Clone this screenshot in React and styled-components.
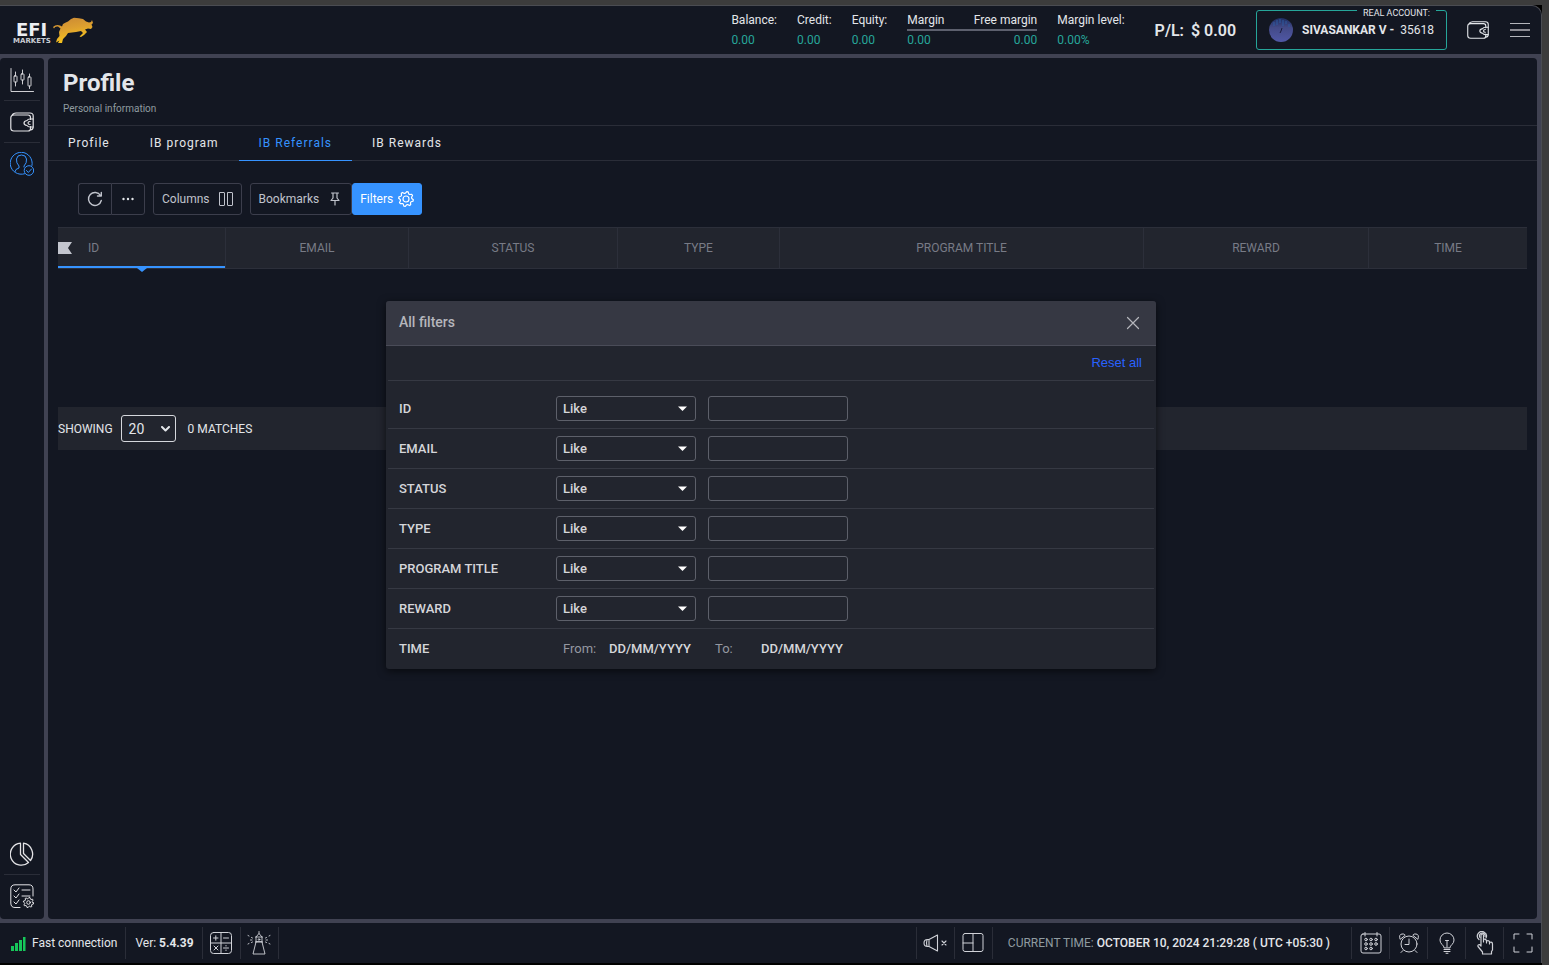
import React from "react";
import styled, { createGlobalStyle, css } from "styled-components";

const c = {
  chrome: "#3c3c3c",
  gutter: "#404252",
  panel: "#131722",
  raised: "#22252e",
  line: "#2a2d38",
  blue: "#3693ff",
  teal: "#26a69a",
  text: "#e3e6ea",
  muted: "#787b86",
};

const Global = createGlobalStyle`
  * { box-sizing: border-box; }
  body { margin: 0; background: #000; color: ${c.text}; font: 400 12px/16px Roboto, "Liberation Sans", sans-serif; }
  button, input, select { font: inherit; color: inherit; }
  button { cursor: pointer; }
  a { color: inherit; text-decoration: none; }
  h1, h2, p, dl, dd { margin: 0; }
  svg { display: block; flex: none; }
`;

const Page = styled.div`
  position: relative;
  display: flex;
  flex-direction: column;
  min-height: 100vh;
  border: solid ${c.chrome};
  border-width: 5px 7px 0 0;
`;

const Shell = styled.div`
  flex: 1;
  display: flex;
  flex-direction: column;
  margin-bottom: 2px;
  border: solid #4a4c52;
  border-width: 1px 1px 0 0;
  border-top-right-radius: 10px;
  background: ${c.gutter};
  overflow: hidden;
`;

const Header = styled.header`
  display: flex;
  align-items: center;
  height: 48px;
  padding: 0 11px 0 10px;
  background: ${c.panel};
`;

const Stats = styled.dl`
  display: flex;
  gap: 20px;
  margin-left: auto;
`;

const Stat = styled.div`
  dt { line-height: 20px; }
  dd { line-height: 20px; color: ${c.teal}; }
`;

const MarginPair = styled.div`
  position: relative;
  display: flex;
  justify-content: space-between;
  width: 130px;
  & > div:last-child dd { text-align: right; }
  &::after {
    content: "";
    position: absolute;
    top: 19px;
    left: 0;
    right: 0;
    height: 2px;
    background: #5d606e;
  }
`;

const Profit = styled.div`
  display: flex;
  gap: 7px;
  margin-left: 30px;
  padding-top: 1px;
  font-size: 16px;
  font-weight: 600;
`;

const Account = styled.button`
  position: relative;
  display: flex;
  align-items: center;
  height: 40px;
  margin-left: 20px;
  padding: 0 12px;
  border: 1px solid ${c.teal};
  border-radius: 3px;
  background: none;
  white-space: pre;
  b { margin: 0 6px 0 9px; font-weight: 700; }
`;

const AccountKind = styled.span`
  position: absolute;
  top: -5px;
  right: 10px;
  padding: 0 6px;
  background: ${c.panel};
  font-size: 9px;
  line-height: 14px;
`;

const IconButton = styled.button`
  display: grid;
  place-items: center;
  padding: 0;
  border: 0;
  background: none;
  color: ${(p) => (p.$dim ? "#b5b6bc" : "inherit")};
  margin-left: ${(p) => p.$gap || 0}px;
`;

const Body = styled.div`
  flex: 1;
  display: flex;
  gap: 4px;
  padding: 4px 4px 4px 0;
`;

const Sidebar = styled.nav`
  display: flex;
  flex-direction: column;
  width: 44px;
  padding: 1px 4px 2px;
  border-radius: 4px;
  background: ${c.panel};
`;

const SideItem = styled.button`
  display: grid;
  place-items: center;
  height: 42px;
  padding: 0;
  border: 0;
  border-bottom: 1px solid ${(p) => (p.$last ? "transparent" : c.line)};
  background: none;
  color: ${(p) => (p.$active ? c.blue : "#e3e3e6")};
  margin-top: ${(p) => (p.$push ? "auto" : 0)};
`;

const Main = styled.main`
  flex: 1;
  min-width: 0;
  border-radius: 4px;
  background: ${c.panel};
`;

const Heading = styled.div`
  height: 68px;
  padding: 9px 15px 0;
  border-bottom: 1px solid ${c.line};
  h1 { font-size: 24px; line-height: 32px; font-weight: 700; }
  p { margin-top: 2px; font-size: 10px; color: #8f9ba0; }
`;

const Tabs = styled.nav`
  display: flex;
  height: 35px;
  border-bottom: 1px solid ${c.line};
`;

const Tab = styled.a`
  height: 35px;
  padding: 0 20px;
  line-height: 34px;
  letter-spacing: 1px;
  ${(p) => p.$active && css`color: ${c.blue}; border-bottom: 1px solid ${c.blue};`}
`;

const Toolbar = styled.div`
  display: flex;
  padding: 22px 30px 12px;
`;

const Tool = styled.button`
  display: flex;
  align-items: center;
  justify-content: center;
  gap: 8px;
  height: 32px;
  min-width: 33px;
  padding: 0 8px;
  border: 1px solid #3c3e4c;
  border-radius: 3px;
  background: none;
  color: #c0c3cc;
  margin-left: ${(p) => p.$gap || 0}px;
  ${(p) => p.$primary && css`gap: 5px; padding: 0 7px; border-color: ${c.blue}; background: ${c.blue}; color: #fff;`}
  ${(p) => p.$joined === "left" && css`border-radius: 3px 0 0 3px; border-right: 0;`}
  ${(p) => p.$joined === "right" && css`min-width: 34px; border-radius: 0 3px 3px 0;`}
`;

const Listing = styled.section`
  margin: 0 10px;
`;

const Table = styled.table`
  width: 100%;
  table-layout: fixed;
  border-collapse: separate;
  border-spacing: 0;
  background: ${c.raised};
`;

const Th = styled.th`
  position: relative;
  height: 42px;
  padding: 0;
  border: solid #2c2f3a;
  border-width: 1px 1px 1px 0;
  color: ${c.muted};
  font-weight: 400;
  text-align: center;
  &:last-child { border-right: 0; }
  ${(p) => p.$sorted && css`
    padding-left: 30px;
    text-align: left;
    &::before {
      content: "";
      position: absolute;
      inset: auto 0 0;
      height: 2px;
      background: ${c.blue};
    }
    &::after {
      content: "";
      position: absolute;
      left: 50%;
      top: 100%;
      margin-left: -5px;
      border: 5px solid transparent;
      border-top: 4px solid ${c.blue};
      border-bottom: 0;
    }
  `}
`;

const Flag = styled.svg`
  position: absolute;
  left: 0;
  top: 14px;
`;

const Pager = styled.div`
  display: flex;
  align-items: center;
  height: 43px;
  margin-top: 138px;
  background: ${c.raised};
`;

const SelectWrap = styled.span`
  position: relative;
  display: inline-flex;
  align-items: center;
  svg { position: absolute; right: 6px; pointer-events: none; }
`;

const PageSize = styled.select`
  width: 55px;
  height: 27px;
  margin: 0;
  padding: 0 7px;
  border: 1px solid #d5d7dc;
  border-radius: 3px;
  background: ${c.raised};
  appearance: none;
  font-size: 14px;
`;

const PagerLabel = styled.label`
  display: flex;
  align-items: center;
  gap: 8px;
  margin-right: 12px;
`;

const Overlay = styled.div`
  position: absolute;
  inset: 296px 0 auto;
  display: flex;
  justify-content: center;
`;

const Dialog = styled.section`
  width: 770px;
  border-radius: 3px;
  background: ${c.raised};
  box-shadow: 0 2px 8px rgba(0, 0, 0, 0.6);
`;

const DialogHead = styled.div`
  display: flex;
  justify-content: space-between;
  align-items: center;
  height: 45px;
  padding: 0 16px 0 13px;
  border-bottom: 1px solid #4a4c58;
  border-radius: 3px 3px 0 0;
  background: #363843;
  h2 { font-size: 14px; font-weight: 500; color: #b5b6bc; padding-bottom: 2px; }
`;

const ResetRow = styled.div`
  display: flex;
  justify-content: flex-end;
  height: 35px;
  margin: 0 2px 8px;
  padding: 0 12px;
  border-bottom: 1px solid #363943;
  button {
    padding: 0;
    border: 0;
    background: none;
    color: #2962ff;
    font-family: "Liberation Sans", sans-serif;
    font-size: 13px;
  }
`;

const FilterRow = styled.div`
  display: flex;
  align-items: center;
  height: 40px;
  margin: 0 2px;
  padding-left: 11px;
  border-bottom: 1px solid #363943;
  font-size: 13px;
  font-weight: 500;
  color: #d5d6da;
  &:last-child { border-bottom: 0; }
`;

const FilterName = styled.label`
  width: 157px;
`;

const FilterSelect = styled.select`
  width: 140px;
  height: 25px;
  padding: 0 6px;
  border: 1px solid #5d606a;
  border-radius: 3px;
  background: ${c.raised};
  appearance: none;
`;

const FilterInput = styled.input`
  width: 140px;
  height: 25px;
  margin-left: 12px;
  padding: 0 6px;
  border: 1px solid #5d606a;
  border-radius: 3px;
  background: none;
`;

const DateField = styled.label`
  display: flex;
  align-items: center;
  width: 152px;
  padding-left: 7px;
  font-weight: 400;
  color: #9598a1;
  span { width: 46px; }
  input {
    width: 90px;
    padding: 0;
    border: 0;
    background: none;
    color: #d5d6da;
    font-weight: 500;
    &::placeholder { color: inherit; opacity: 1; }
  }
`;

const StatusBar = styled.footer`
  display: flex;
  align-items: center;
  height: 40px;
  background: ${c.panel};
`;

const Cell = styled.div`
  display: flex;
  align-items: center;
  gap: 6px;
  height: 32px;
  padding: ${(p) => p.$pad || "0 8px 0 9px"};
  border-right: 1px solid ${c.line};
  b { font-weight: 700; }
`;

const CellButton = styled.button`
  display: grid;
  place-items: center;
  width: 38px;
  height: 32px;
  padding: 0;
  border: solid ${c.line};
  border-width: 0 ${(p) => (p.$side === "left" ? 0 : 1)}px 0 ${(p) => (p.$side === "left" ? 1 : 0)}px;
  background: none;
  color: #d0d2d8;
`;

const Clock = styled.div`
  height: 32px;
  padding: 0 21px 0 15px;
  border-left: 1px solid ${c.line};
  line-height: 32px;
  color: #8f9ba0;
  time { color: ${c.text}; font-weight: 500; }
`;

const Right = styled.div`
  display: flex;
  align-items: center;
  margin-left: auto;
`;

const Icon = ({ w = 24, h = w, box = `0 0 ${w} ${h}`, sw = 1, children }) => (
  <svg width={w} height={h} viewBox={box} fill="none" stroke="currentColor" strokeWidth={sw} strokeLinecap="round" strokeLinejoin="round" aria-hidden="true">
    {children}
  </svg>
);

const LogoText = styled.text`
  font-family: "DejaVu Sans", sans-serif;
  font-weight: 700;
  font-size: ${(p) => p.$size}px;
  fill: ${(p) => p.$fill};
`;

const Logo = () => (
  <svg width="84" height="30" viewBox="0 0 84 30" role="img" aria-label="EFI Markets">
    <defs>
      <linearGradient id="gold" x1="0" y1="0" x2="0.3" y2="1">
        <stop offset="0" stopColor="#c98735" />
        <stop offset="0.5" stopColor="#dc9f30" />
        <stop offset="1" stopColor="#f8c51c" />
      </linearGradient>
    </defs>
    <LogoText x="6" y="21" $size={18} $fill="#eceef2">EFI</LogoText>
    <LogoText x="3" y="28" $size={7} $fill="#c9ccd2">MARKETS</LogoText>
    <path fill="url(#gold)" d="M43 12Q46 9 50 10.500L52 11.500L53 9Q56 7 58 6.500L61 4L64 2.800L69 3.300L73 4L76 6.500L79 7.500L81 7L82 5L83 8L81.500 9.500L82.500 12L81 14L78 13.500L75 14.500L77 17L74 20L71 22L69.500 21.500L73 18L71 16L66 17L62 17.500L58 18L56 21L53 24L52 28L48 28L49.500 25.500L46 27.500L47 24L49.500 21L49 17L50.500 13.500L48 11.500Q45 11 44 13.500Z" />
  </svg>
);

const Wallet = ({ w = 24 }) => (
  <Icon w={w} box="0 0 24 24" sw={1.2}>
    <path d="M4 5H18Q20.500 5 20.500 7.500V9.500M4 5Q0.800 5 0.800 8V18Q0.800 21 4 21H18Q20.500 21 20.500 18.500V16.500M2 5.500Q3 3 6 3H20Q23.200 3 23.200 6V17Q23.200 19.500 20.500 20" />
    <path d="M23 9H20Q18 9 17 10.500Q14 11 14 13T17 15.500Q18 17 20 17H23M20 11.500Q18 11.500 18 13T20 14.500" />
  </Icon>
);

const Candles = () => (
  <Icon sw={0.9}>
    <path d="M1 0.500V23.500H23.500M5.500 4V8M5.500 14V18M12.500 2V6M12.500 12V16M19.500 6V9M19.500 18V20.500" />
    <rect x="4" y="8" width="3" height="6" rx="0.500" />
    <rect x="11" y="6" width="3" height="6" rx="0.500" />
    <rect x="18" y="9" width="3" height="9" rx="0.500" />
  </Icon>
);

const UserCheck = () => (
  <Icon>
    <path d="M14.500 21.800A11 11 0 1 1 22 13.500" />
    <path d="M5 19.500Q5 17 9 16V14Q6 11 6.500 7Q7 3 11.500 3T16.500 7Q17 11 14 14V15" />
    <circle cx="19" cy="18.500" r="4.800" />
    <path d="M16.500 18.500L18.300 20.500L21.500 17" />
  </Icon>
);

const Pie = () => (
  <Icon sw={1.3}>
    <path d="M10.500 1.200V12.500L18.500 20.500A11 11 0 1 1 10.500 1.200Z" />
    <path d="M13.500 1.200V11.500L20.500 18.500A11 11 0 0 0 13.500 1.200Z" />
  </Icon>
);

const gearTeeth = (cx, cy, r, n, depth) => {
  const pts = [];
  for (let i = 0; i < n * 4; i += 1) {
    const a = ((i + 0.5) / (n * 4)) * Math.PI * 2;
    const rad = i % 4 < 2 ? r : r - depth;
    pts.push(`${(cx + Math.cos(a) * rad).toFixed(2)} ${(cy + Math.sin(a) * rad).toFixed(2)}`);
  }
  return `M${pts.join("L")}Z`;
};

const Checklist = () => (
  <Icon>
    <path d="M10 23.500H5Q0.800 23.500 0.800 19V5Q0.800 0.800 5 0.800H19Q23 0.800 23 5V12" />
    <path d="M4 6L6 8L9 4M12 6H20M4 12L6 14L9 10M12 12H20M4 18L6 20L9 16" />
    <path d={gearTeeth(18.5, 18.5, 5.2, 8, 1.3)} />
    <circle cx="18.500" cy="18.500" r="1.800" />
  </Icon>
);

const Gear = () => (
  <Icon w={16} sw={1.2}>
    <path d={gearTeeth(8, 8, 7.4, 8, 1.6)} />
    <circle cx="8" cy="8" r="3" />
  </Icon>
);

const Caret = () => (
  <svg width="16" height="6" viewBox="0 0 16 6" aria-hidden="true">
    <path d="M4 0.500H13L8.500 5Z" fill="#fff" />
  </svg>
);

const Avatar = () => (
  <svg width="24" height="24" viewBox="0 0 24 24" aria-hidden="true">
    <defs>
      <linearGradient id="dusk" x1="0" y1="0" x2="0" y2="1">
        <stop offset="0" stopColor="#1e2e62" />
        <stop offset="0.4" stopColor="#434a87" />
        <stop offset="1" stopColor="#5058a6" />
      </linearGradient>
    </defs>
    <circle cx="12" cy="12" r="12" fill="url(#dusk)" />
    <path d="M5 4V8M8 2V7M11 1V5M14 2V8M17 3V6M20 6V9" stroke="#2f5aa0" />
    <path d="M13 10L12 13L11 15" stroke="#1b1d3c" fill="none" />
  </svg>
);

const columns = [
  ["ID", 168], ["EMAIL", 183], ["STATUS", 209], ["TYPE", 162],
  ["PROGRAM TITLE", 364], ["REWARD", 225], ["TIME", 158],
];
const filters = ["ID", "EMAIL", "STATUS", "TYPE", "PROGRAM TITLE", "REWARD"];

const StatItem = ({ label, value }) => (
  <Stat><dt>{label}</dt><dd>{value}</dd></Stat>
);

export default function App() {
  return (
    <Page>
      <Global />
      <Shell>
        <Header>
          <Logo />
          <Stats>
            <StatItem label="Balance:" value="0.00" />
            <StatItem label="Credit:" value="0.00" />
            <StatItem label="Equity:" value="0.00" />
            <MarginPair>
              <StatItem label="Margin" value="0.00" />
              <StatItem label="Free margin" value="0.00" />
            </MarginPair>
            <StatItem label="Margin level:" value="0.00%" />
          </Stats>
          <Profit><span>P/L:</span><span>$ 0.00</span></Profit>
          <Account type="button">
            <AccountKind>REAL ACCOUNT:</AccountKind>
            <Avatar />
            <b>SIVASANKAR V -</b>35618
          </Account>
          <IconButton type="button" aria-label="Wallet" $gap={20}><Wallet w={22} /></IconButton>
          <IconButton type="button" aria-label="Menu" $gap={21}>
            <svg width="20" height="14" viewBox="0 0 20 14" stroke="#b5b6bc" aria-hidden="true">
              <path d="M0 0.500H20M0 13.500H20" />
              <path d="M0 7H20" strokeWidth="2" stroke="#8c8c93" />
            </svg>
          </IconButton>
        </Header>

        <Body>
          <Sidebar aria-label="Sections">
            <SideItem type="button" aria-label="Charts"><Candles /></SideItem>
            <SideItem type="button" aria-label="Funds"><Wallet /></SideItem>
            <SideItem type="button" aria-label="Profile" $active $last><UserCheck /></SideItem>
            <SideItem type="button" aria-label="Analytics" $push><Pie /></SideItem>
            <SideItem type="button" aria-label="Settings" $last><Checklist /></SideItem>
          </Sidebar>

          <Main>
            <Heading>
              <h1>Profile</h1>
              <p>Personal information</p>
            </Heading>
            <Tabs aria-label="Profile pages">
              <Tab href="#profile">Profile</Tab>
              <Tab href="#program">IB program</Tab>
              <Tab href="#referrals" $active>IB Referrals</Tab>
              <Tab href="#rewards">IB Rewards</Tab>
            </Tabs>
            <Toolbar>
              <Tool type="button" aria-label="Refresh" $joined="left">
                <Icon w={16} sw={1.4}><path d="M13.500 4.500A6.500 6.500 0 1 0 14.300 9.500M14.300 1.500V5H10.500" /></Icon>
              </Tool>
              <Tool type="button" aria-label="More" $joined="right">
                <svg width="12" height="4" viewBox="0 0 12 4" fill="#e3e6ea" aria-hidden="true">
                  <circle cx="1.500" cy="2" r="1.200" /><circle cx="6" cy="2" r="1.200" /><circle cx="10.500" cy="2" r="1.200" />
                </svg>
              </Tool>
              <Tool type="button" $gap={8}>
                Columns
                <Icon w={15} h={16}><rect x="1.500" y="1.500" width="5" height="13" rx="0.500" /><rect x="9.500" y="1.500" width="5" height="13" rx="0.500" /></Icon>
              </Tool>
              <Tool type="button" $gap={8}>
                Bookmarks
                <Icon w={16} sw={1.2}><path d="M4.500 2H11.500M6 2V7L4 9.500H12L10 7V2M8 9.500V14" /></Icon>
              </Tool>
              <Tool type="button" $primary>Filters <Gear /></Tool>
            </Toolbar>

            <Listing>
              <Table>
                <colgroup>
                  {columns.map(([name, width]) => <col key={name} width={width} />)}
                </colgroup>
                <thead>
                  <tr>
                    {columns.map(([name], i) => (
                      <Th key={name} scope="col" $sorted={i === 0}>
                        {i === 0 && (
                          <Flag width="14" height="12" viewBox="0 0 14 12" aria-hidden="true">
                            <path d="M0 0H14L10 6L14 12H0Z" fill="#c3c5ce" />
                          </Flag>
                        )}
                        {name}
                      </Th>
                    ))}
                  </tr>
                </thead>
              </Table>
              <Pager>
                <PagerLabel>
                  SHOWING
                  <SelectWrap>
                    <PageSize defaultValue="20"><option>20</option><option>50</option></PageSize>
                    <Icon w={9} h={6} sw={2}><path d="M1 1L4.500 4.500L8 1" /></Icon>
                  </SelectWrap>
                </PagerLabel>
                0 MATCHES
              </Pager>
            </Listing>
          </Main>
        </Body>

        <StatusBar>
          <Cell $pad="0 8px 0 11px">
            <svg width="15" height="15" viewBox="0 0 15 15" fill="#16c75a" aria-hidden="true">
              <path d="M0 10H3V15H0ZM4 7H7V15H4ZM8 4H11V15H8ZM12 1H14.500V15H12Z" />
            </svg>
            Fast connection
          </Cell>
          <Cell><span>Ver: <b>5.4.39</b></span></Cell>
          <CellButton type="button" aria-label="Calculator">
            <Icon w={22}>
              <rect x="0.500" y="0.500" width="21" height="21" rx="3" />
              <path d="M11 1V21M1 11H21M3.500 6H8M5.800 3.800V8.200M13.500 6H18.500M4 14L8 18M8 14L4 18M13.500 16H18.500M16 13.500V14M16 18V18.500" />
            </Icon>
          </CellButton>
          <CellButton type="button" aria-label="Lighthouse">
            <Icon w={24} sw={0.9}>
              <path d="M9 11L6 23H18L15 11ZM8.500 11H15.500M9 11V6L12 2.500L15 6V11M8.500 6H15.500M12 0.500V2.500" />
              <circle cx="12" cy="8.500" r="0.800" />
              <path d="M5.500 7L4.500 6.500M2 5L1 4.500M5 9H3.500M5.500 11L4.500 11.500M2 12.500L1 13M18.500 7L19.500 6.500M22 5L23 4.500M19 9H20.500M18.500 11L19.500 11.500M22 12.500L23 13" />
            </Icon>
          </CellButton>

          <Right>
            <CellButton type="button" aria-label="Mute" $side="left">
              <Icon w={24} sw={1.1}>
                <path d="M6 8.500L14.500 4V20L6 15.500M6 8.500V15.500M6 8.500H4.500Q1 8.500 1 12T4.500 15.500H6M4 9Q3 12 4 15M19 10L23 14M23 10L19 14" />
              </Icon>
            </CellButton>
            <CellButton type="button" aria-label="Layout" $side="left">
              <Icon w={22}><rect x="1" y="1.500" width="20" height="18" rx="2" /><path d="M11 1.500V19.500M1 11H11" /></Icon>
            </CellButton>
            <Clock>CURRENT TIME: <time dateTime="2024-10-10T21:29:28+05:30">OCTOBER 10, 2024 21:29:28 ( UTC +05:30 )</time></Clock>
            <CellButton type="button" aria-label="Calendar" $side="left">
              <Icon w={22}>
                <rect x="1" y="2" width="20" height="19" rx="2" /><path d="M5 0.500V4M17 0.500V4" />
                {[[9.5, 7.5], [14.5, 7.5], [4.5, 7.5], [4.5, 12], [9.5, 12], [14.5, 12], [4.5, 16.5], [9.5, 16.5]].map(([x, y]) => (
                  <circle key={`${x}-${y}`} cx={x + 1.5} cy={y} r="1.300" />
                ))}
              </Icon>
            </CellButton>
            <CellButton type="button" aria-label="Alarm" $side="left">
              <Icon w={22}>
                <circle cx="11" cy="12" r="8" /><path d="M11 7V12.500H7M5 18.500L3 20.500M17 18.500L19 20.500M2 7Q0.500 2.500 4 2Q6 1.500 7 3ZM20 7Q21.500 2.500 18 2Q16 1.500 15 3Z" />
              </Icon>
            </CellButton>
            <CellButton type="button" aria-label="Tips" $side="left">
              <Icon w={22}>
                <path d="M8 15.500Q8 14 6 12.500Q4 10.500 4 8A7 7 0 0 1 18 8Q18 10.500 16 12.500Q14 14 14 15.500ZM8 17.500H14M8 19.500H14M10 21.300H12M9.500 8.500H12.500M11 8.500V15" />
              </Icon>
            </CellButton>
            <CellButton type="button" aria-label="One click trading" $side="left">
              <Icon w={24} sw={1.2}>
                <path d="M8 15V4.500Q8 3 9.200 3T10.500 4.500V11M10.500 8.500Q13 7.500 13.500 10V12M13.500 10Q16 9 16.500 11V13M16.500 11.500Q19.500 10.500 19.500 13V19L18.500 20.500V23H9.500V21L5 15.500Q4.500 13.500 6.500 13.500L8 15" />
                <path d="M6 8.500A4.500 4.500 0 1 1 13 7M7 6.500A2.800 2.800 0 1 1 12 5.500" />
              </Icon>
            </CellButton>
            <CellButton type="button" aria-label="Full screen" $side="left">
              <Icon w={20}><path d="M1 6V1H6M14 1H19V6M19 14V19H14M6 19H1V14" /></Icon>
            </CellButton>
          </Right>
        </StatusBar>
      </Shell>

      <Overlay>
        <Dialog role="dialog" aria-labelledby="filters-title">
          <DialogHead>
            <h2 id="filters-title">All filters</h2>
            <IconButton type="button" aria-label="Close" $dim>
              <Icon w={14} sw={1.2}><path d="M1.500 1.500L12.500 12.500M12.500 1.500L1.500 12.500" /></Icon>
            </IconButton>
          </DialogHead>
          <ResetRow><button type="button">Reset all</button></ResetRow>
          {filters.map((name) => {
            const id = `filter-${name.toLowerCase().replace(" ", "-")}`;
            return (
              <FilterRow key={name}>
                <FilterName htmlFor={id}>{name}</FilterName>
                <SelectWrap>
                  <FilterSelect aria-label={`${name} condition`}><option>Like</option><option>Equal</option></FilterSelect>
                  <Caret />
                </SelectWrap>
                <FilterInput id={id} type="text" />
              </FilterRow>
            );
          })}
          <FilterRow>
            <FilterName as="span">TIME</FilterName>
            <DateField><span>From:</span><input type="text" placeholder="DD/MM/YYYY" /></DateField>
            <DateField><span>To:</span><input type="text" placeholder="DD/MM/YYYY" /></DateField>
          </FilterRow>
        </Dialog>
      </Overlay>
    </Page>
  );
}
